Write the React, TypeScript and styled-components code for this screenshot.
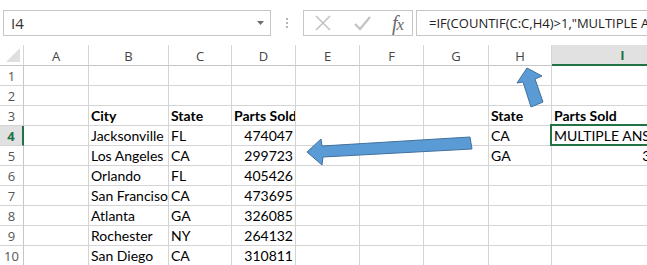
import styled, { createGlobalStyle } from "styled-components";

const GlobalStyle = createGlobalStyle`
  body {
    margin: 0;
    background: #fff;
    overflow: hidden;
  }
`;

const columns = [
  { key: "A", width: 65 },
  { key: "B", width: 80 },
  { key: "C", width: 63 },
  { key: "D", width: 64 },
  { key: "E", width: 64 },
  { key: "F", width: 64 },
  { key: "G", width: 65 },
  { key: "H", width: 63 },
  { key: "I", width: 142 },
];

type CellData = { v: string; bold?: boolean; right?: boolean };
type RowData = Record<string, CellData>;

const bold = (v: string): CellData => ({ v, bold: true });
const txt = (v: string): CellData => ({ v });
const num = (v: string): CellData => ({ v, right: true });

const rows: RowData[] = [
  {},
  {},
  { B: bold("City"), C: bold("State"), D: bold("Parts Sold"), H: bold("State"), I: bold("Parts Sold") },
  { B: txt("Jacksonville"), C: txt("FL"), D: num("474047"), H: txt("CA"), I: txt("MULTIPLE ANSWERS") },
  { B: txt("Los Angeles"), C: txt("CA"), D: num("299723"), H: txt("GA"), I: num("326085") },
  { B: txt("Orlando"), C: txt("FL"), D: num("405426") },
  { B: txt("San Franciso"), C: txt("CA"), D: num("473695") },
  { B: txt("Atlanta"), C: txt("GA"), D: num("326085") },
  { B: txt("Rochester"), C: txt("NY"), D: num("264132") },
  { B: txt("San Diego"), C: txt("CA"), D: num("310811") },
];

const selectedCol = "I";
const selectedRow = 4;

const App = () => {
  return (
    <>
      <GlobalStyle />
      <Page>
        <FormulaBar>
          <NameBox>
            <span>I4</span>
            <svg width="7" height="4" viewBox="0 0 7 4">
              <path d="M0 0 L7 0 L3.5 4 Z" fill="#6d6d6d" />
            </svg>
          </NameBox>
          <Dots>
            <i />
            <i />
            <i />
          </Dots>
          <ButtonBox>
            <svg width="18" height="18" viewBox="0 0 18 18">
              <path d="M2 2 L16 16 M16 2 L2 16" stroke="#c3c3c3" strokeWidth="1.6" fill="none" />
            </svg>
            <svg width="18" height="18" viewBox="0 0 18 18">
              <path d="M2 10 L7 15 L17 3" stroke="#c3c3c3" strokeWidth="2.2" fill="none" />
            </svg>
            <FxLabel>
              f<small>x</small>
            </FxLabel>
          </ButtonBox>
          <FormulaInput>=IF(COUNTIF(C:C,H4)&gt;1,"MULTIPLE ANSWERS",VLOOKUP(H4,C:D,2,FALSE))</FormulaInput>
        </FormulaBar>

        <Sheet $cols={columns.map((c) => c.width)}>
          <Corner>
            <svg width="15" height="15" viewBox="0 0 15 15">
              <path d="M14 0 L14 14 L0 14 Z" fill="#dfdfdf" />
            </svg>
          </Corner>
          {columns.map((c) => (
            <ColHeader key={c.key} $selected={c.key === selectedCol}>
              {c.key}
            </ColHeader>
          ))}
          {rows.map((row, i) => {
            const n = i + 1;
            return [
              <RowHeader key={`h${n}`} $selected={n === selectedRow}>
                {n}
              </RowHeader>,
              ...columns.map((c) => {
                const cell = row[c.key];
                return (
                  <Cell
                    key={`${c.key}${n}`}
                    $bold={cell?.bold}
                    $right={cell?.right}
                    $active={c.key === selectedCol && n === selectedRow}
                  >
                    {cell?.v}
                  </Cell>
                );
              }),
            ];
          })}
        </Sheet>

        <Arrows width="647" height="265" viewBox="0 0 647 265">
          <polygon
            points="307,152 321,139 322,146 470,137 472,149 323,157 322,165"
            fill="#5b9bd5"
            stroke="#41719c"
            strokeWidth="1"
          />
          <polygon
            points="527,68 542,76 535,79 543,102 531,107 523,82 517,83"
            fill="#5b9bd5"
            stroke="#41719c"
            strokeWidth="1"
          />
        </Arrows>
      </Page>
    </>
  );
};

export default App;

const Page = styled.div`
  position: relative;
  width: 647px;
  height: 265px;
  overflow: hidden;
  background: #fff;
`;

const FormulaBar = styled.div`
  display: flex;
  align-items: center;
  height: 45px;
  padding: 10px 0 9px 3px;
  box-sizing: border-box;
  font-family: "Open Sans", "Noto Sans", sans-serif;
`;

const NameBox = styled.div`
  width: 268px;
  height: 26px;
  box-sizing: border-box;
  border: 1px solid #c6c6c6;
  display: flex;
  align-items: center;
  justify-content: space-between;
  padding: 0 6px 0 7px;
  font-size: 15px;
  color: #333;
`;

const Dots = styled.div`
  width: 32px;
  display: flex;
  flex-direction: column;
  align-items: center;
  gap: 2px;

  i {
    width: 2px;
    height: 2px;
    background: #b5b5b5;
  }
`;

const ButtonBox = styled.div`
  width: 110px;
  height: 26px;
  box-sizing: border-box;
  border: 1px solid #c6c6c6;
  display: flex;
  align-items: center;
  justify-content: space-between;
  padding: 0 9px 0 10px;
`;

const FxLabel = styled.span`
  font-family: "Liberation Serif", "DejaVu Serif", serif;
  font-style: italic;
  font-size: 20px;
  color: #6a6a6a;
  letter-spacing: -1px;

  small {
    font-size: 17px;
  }
`;

const FormulaInput = styled.div`
  flex: 1;
  margin-left: 3px;
  height: 26px;
  box-sizing: border-box;
  border: 1px solid #c6c6c6;
  border-right: none;
  display: flex;
  align-items: center;
  padding-left: 12px;
  font-size: 13px;
  color: #222;
  white-space: nowrap;
  overflow: hidden;
`;

const Sheet = styled.div<{ $cols: number[] }>`
  display: grid;
  grid-template-columns: 24px ${(p) => p.$cols.map((w) => `${w}px`).join(" ")};
  grid-template-rows: 21px repeat(10, 20px);
  width: max-content;
`;

const Corner = styled.div`
  border-right: 1px solid #d4d4d4;
  border-bottom: 1px solid #c6c6c6;
  display: flex;
  align-items: flex-end;
  justify-content: flex-end;
  padding: 0 2px 2px 0;
`;

const ColHeader = styled.div<{ $selected?: boolean }>`
  box-sizing: border-box;
  display: flex;
  align-items: center;
  justify-content: center;
  padding-top: 1px;
  font-family: "Open Sans", "Noto Sans", sans-serif;
  font-size: 13px;
  color: ${(p) => (p.$selected ? "#217346" : "#444")};
  font-weight: ${(p) => (p.$selected ? 700 : 400)};
  background: ${(p) => (p.$selected ? "#e1e1e1" : "#fff")};
  border-right: 1px solid #d4d4d4;
  border-bottom: ${(p) => (p.$selected ? "2px solid #217346" : "1px solid #c6c6c6")};
`;

const RowHeader = styled.div<{ $selected?: boolean }>`
  box-sizing: border-box;
  display: flex;
  align-items: center;
  justify-content: center;
  font-family: "Open Sans", "Noto Sans", sans-serif;
  font-size: 13px;
  color: ${(p) => (p.$selected ? "#217346" : "#555")};
  font-weight: ${(p) => (p.$selected ? 700 : 400)};
  background: ${(p) => (p.$selected ? "#e1e1e1" : "#fff")};
  border-right: ${(p) => (p.$selected ? "2px solid #217346" : "1px solid #c6c6c6")};
  border-bottom: 1px solid #d4d4d4;
`;

const Cell = styled.div<{ $bold?: boolean; $right?: boolean; $active?: boolean }>`
  position: relative;
  box-sizing: border-box;
  display: flex;
  align-items: flex-end;
  justify-content: ${(p) => (p.$right ? "flex-end" : "flex-start")};
  padding: 0 2px 1px 2px;
  border-right: 1px solid #d4d4d4;
  border-bottom: 1px solid #d4d4d4;
  font-family: Lato, "Open Sans", sans-serif;
  font-size: 14px;
  font-weight: ${(p) => (p.$bold ? 700 : 400)};
  color: #000;
  white-space: nowrap;
  overflow: ${(p) => (p.$active ? "visible" : "hidden")};

  &::after {
    content: "";
    display: ${(p) => (p.$active ? "block" : "none")};
    position: absolute;
    top: -2px;
    left: -2px;
    right: -2px;
    bottom: -1px;
    border: 2px solid #217346;
    pointer-events: none;
  }
`;

const Arrows = styled.svg`
  position: absolute;
  top: 0;
  left: 0;
  pointer-events: none;
`;
